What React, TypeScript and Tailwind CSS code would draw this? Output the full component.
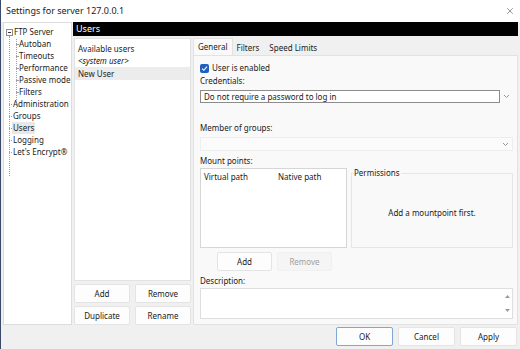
import { X } from "lucide-react";

const treeTop = [
  { label: "Administration" },
  { label: "Groups" },
  { label: "Users", selected: true },
  { label: "Logging" },
  { label: "Let's Encrypt®" },
];

const ftpChildren = ["Autoban", "Timeouts", "Performance", "Passive mode", "Filters"];

function Chevron() {
  return (
    <svg width="7" height="5" viewBox="0 0 7 5" className="text-[#8a8a8a]">
      <polyline points="1,1 3.5,3.5 6,1" fill="none" stroke="currentColor" strokeWidth="0.9" />
    </svg>
  );
}

function Button({ label, disabled, primary, className = "" }: { label: string; disabled?: boolean; primary?: boolean; className?: string }) {
  return (
    <div
      className={`h-[19px] flex items-center justify-center rounded-[2px] border ${
        primary ? "border-[#7fa6d6] bg-[#fdfdfd]" : disabled ? "border-[#f0f0f0] bg-[#f5f5f5]" : "border-[#e4e4e4] bg-[#fdfdfd]"
      } ${disabled ? "text-[#a0a0a0]" : "text-[#1b1b1b]"} ${className}`}
    >
      {label}
    </div>
  );
}

export default function App() {
  return (
    <div
      className="w-[520px] h-[349px] bg-[#f0f0f0] flex flex-col text-[8px] leading-[12px] text-[#1b1b1b] overflow-hidden border-l border-[#3b4a6b]"
      style={{ fontFamily: '"Noto Sans", "Open Sans", sans-serif' }}
    >
      {/* Title bar */}
      <div className="h-[22px] bg-white flex items-center justify-between pl-[5px] pr-[5px] shrink-0">
        <span className="text-[9px]">Settings for server 127.0.0.1</span>
        <X className="w-[10px] h-[10px] text-[#333]" strokeWidth={1.2} />
      </div>

      {/* Body */}
      <div className="flex h-[303px] shrink-0">
        {/* Tree */}
        <div className="ml-[2px] w-[69px] bg-white border border-[#dcdcdc] pt-[3px] relative whitespace-nowrap overflow-hidden">
          <div className="flex items-center h-[12px]">
            <span className="ml-[2px] w-[7px] h-[7px] border border-[#8c8c8c] flex items-center justify-center bg-white z-10">
              <span className="w-[3px] h-px bg-[#333]" />
            </span>
            <span className="ml-[1px]">FTP Server</span>
          </div>
          <div className="absolute left-[5px] top-[13px] h-[140px] border-l border-dotted border-[#a0a0a0]" />
          <div className="absolute left-[12px] top-[16px] h-[69px] border-l border-dotted border-[#a0a0a0]" />
          {ftpChildren.map((c) => (
            <div key={c} className="flex items-center h-[12px] relative">
              <span className="ml-[12px] w-[2px] border-t border-dotted border-[#a0a0a0]" />
              <span className="ml-[1px]">{c}</span>
            </div>
          ))}
          {treeTop.map((t) => (
            <div key={t.label} className="flex items-center h-[12px]">
              <span className="ml-[5px] w-[3px] border-t border-dotted border-[#a0a0a0]" />
              <span className={`px-[1px] ${t.selected ? "bg-[#e8e8e8]" : ""}`}>{t.label}</span>
            </div>
          ))}
        </div>

        {/* Right area */}
        <div className="flex-1 ml-[1px] mr-[2px] flex flex-col">
          <div className="h-[14px] bg-black text-white flex items-center pl-[3px] text-[9px]">Users</div>
          <div className="flex flex-1 mt-[2px]">
            {/* Users column */}
            <div className="w-[117px] ml-px flex flex-col">
              <div className="h-[243px] bg-white border border-[#e2e2e2] pt-[4px]">
                <div className="h-[12px] pl-[3px] flex items-center">Available users</div>
                <div className="h-[12px] pl-[3px] flex items-center italic">&lt;system user&gt;</div>
                <div className="h-[13px] pl-[3px] flex items-center bg-[#ececec]">New User</div>
              </div>
              <div className="grid grid-cols-2 gap-x-[5px] gap-y-[3px] mt-[3px]">
                <Button label="Add" />
                <Button label="Remove" />
                <Button label="Duplicate" />
                <Button label="Rename" />
              </div>
            </div>

            {/* Tabs */}
            <div className="flex-1 ml-[2px] flex flex-col">
              <div className="h-[17px] flex items-end shrink-0">
                <div className="h-[17px] px-[4px] bg-[#f9f9f9] border border-b-0 border-[#e2e2e2] flex items-center">General</div>
                <div className="h-[15px] px-[4px] flex items-center">Filters</div>
                <div className="h-[15px] px-[6px] flex items-center">Speed Limits</div>
              </div>
              <div className="h-[270px] bg-[#f9f9f9] border border-[#e2e2e2] pl-[6px] pr-[4px] pt-[6px] flex flex-col">
                <div className="flex items-center h-[12px]">
                  <span className="w-[9px] h-[9px] rounded-[2px] bg-[#1f5fbf] flex items-center justify-center">
                    <svg width="7" height="7" viewBox="0 0 7 7">
                      <polyline points="1,3.6 2.8,5.3 6,1.7" fill="none" stroke="white" strokeWidth="1.1" />
                    </svg>
                  </span>
                  <span className="ml-[3px]">User is enabled</span>
                </div>
                <div className="h-[12px] flex items-center mt-[1px]">Credentials:</div>
                <div className="flex items-center mt-[3px]">
                  <div className="h-[13px] flex-1 bg-white border border-[#8c8c8c] flex items-center pl-[3px]">
                    Do not require a password to log in
                  </div>
                  <div className="w-[13px] flex justify-center">
                    <Chevron />
                  </div>
                </div>
                <div className="h-[12px] flex items-center mt-[19px]">Member of groups:</div>
                <div className="h-[14px] mt-[3px] bg-[#fbfbfb] border border-[#eeeeee] flex items-center justify-end pr-[3px]">
                  <Chevron />
                </div>
                <div className="h-[12px] flex items-center mt-[4px]">Mount points:</div>
                <div className="flex mt-[1px]">
                  <div className="w-[147px] h-[80px] bg-white border border-[#d6d6d6] pt-[2px] flex">
                    <span className="ml-[3px] w-[74px]">Virtual path</span>
                    <span>Native path</span>
                  </div>
                  <div className="flex-1 ml-[4px] mt-[5px] h-[75px] border border-[#e6e6e6] relative flex items-center justify-center">
                    <span className="absolute left-[2px] top-[-7px] bg-[#f9f9f9] pr-[1px]">Permissions</span>
                    <span className="mt-[4px]">Add a mountpoint first.</span>
                  </div>
                </div>
                <div className="flex mt-[4px] ml-[17px] gap-[5px]">
                  <Button label="Add" className="w-[55px]" />
                  <Button label="Remove" disabled className="w-[55px]" />
                </div>
                <div className="h-[12px] flex items-center mt-[4px]">Description:</div>
                <div className="h-[31px] mt-[1px] bg-white border border-[#dedede] flex justify-end">
                  <div className="w-[10px] flex flex-col items-center justify-between py-[6px]">
                    <svg width="5" height="3" viewBox="0 0 5 3"><polygon points="0,3 2.5,0 5,3" fill="#9a9a9a" /></svg>
                    <svg width="5" height="3" viewBox="0 0 5 3"><polygon points="0,0 2.5,3 5,0" fill="#9a9a9a" /></svg>
                  </div>
                </div>
              </div>
            </div>
          </div>
        </div>
      </div>

      {/* Footer buttons */}
      <div className="flex justify-end gap-[5px] mt-[2px] pr-[3px]">
        <Button label="OK" primary className="w-[57px]" />
        <Button label="Cancel" className="w-[57px]" />
        <Button label="Apply" className="w-[57px]" />
      </div>
    </div>
  );
}
